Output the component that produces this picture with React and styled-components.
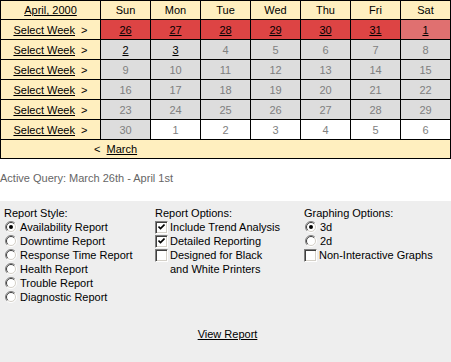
import React from "react";
import styled, { createGlobalStyle } from "styled-components";

const GlobalStyle = createGlobalStyle`
  html, body {
    margin: 0;
    padding: 0;
    background: #ffffff;
  }
  body {
    font-family: "Liberation Sans", Arial, sans-serif;
    font-size: 11px;
    color: #000;
  }
`;

const DAYS = ["Sun", "Mon", "Tue", "Wed", "Thu", "Fri", "Sat"];

// tone: red = active week, sat = active week edge, link = clickable past day,
// past = grey day of this month, next = next month
const WEEKS = [
  [
    [26, "red"], [27, "red"], [28, "red"], [29, "red"], [30, "red"], [31, "red"], [1, "sat"],
  ],
  [[2, "link"], [3, "link"], [4], [5], [6], [7], [8]],
  [[9], [10], [11], [12], [13], [14], [15]],
  [[16], [17], [18], [19], [20], [21], [22]],
  [[23], [24], [25], [26], [27], [28], [29]],
  [[30], [1, "next"], [2, "next"], [3, "next"], [4, "next"], [5, "next"], [6, "next"]],
];

const cellBg = {
  red: "#dd4444",
  sat: "#e07070",
  link: "#dddddd",
  past: "#dddddd",
  next: "#ffffff",
};

const Calendar = styled.div`
  display: grid;
  grid-template-columns: 99px repeat(7, 49px);
  grid-template-rows: 18px repeat(6, 19px) 18px;
  gap: 1px;
  padding: 1px;
  width: 451px;
  box-sizing: border-box;
  background: #000;
`;

const HeadCell = styled.div`
  background: #ffefbf;
  display: flex;
  align-items: center;
  justify-content: center;
  white-space: pre;
`;

const DayCell = styled.div`
  background: ${(p) => cellBg[p.$tone]};
  color: ${(p) => (p.$tone === "past" || p.$tone === "next" ? "#808080" : "#000")};
  display: flex;
  align-items: center;
  justify-content: center;
`;

const Footer = styled.div`
  grid-column: 1 / -1;
  background: #ffefbf;
  display: flex;
  align-items: center;
  padding-left: 93px;
  white-space: pre;
`;

const Link = styled.a`
  color: #000;
  text-decoration: underline;
  cursor: pointer;
`;

const ActiveQuery = styled.div`
  color: #666666;
  line-height: 14px;
  padding: 12px 0 16px;
`;

const Panel = styled.div`
  background: #eeeeee;
  padding: 5px 0 0 4px;
  min-height: 170px;
  box-sizing: border-box;
`;

const Columns = styled.div`
  display: grid;
  grid-template-columns: 151px 149px 1fr;
  line-height: 14px;
`;

const Group = styled.div`
  display: flex;
  flex-direction: column;
`;

const Option = styled.label`
  display: flex;
  align-items: flex-start;
  gap: ${(p) => (p.$box ? "2px" : "3px")};
  padding-left: ${(p) => (p.$box ? "0" : "1px")};
`;

const Mark = styled.span`
  flex: none;
  display: flex;
  margin-top: 1px;
`;

const Box = styled.span`
  flex: none;
  width: 13px;
  height: 13px;
  box-sizing: border-box;
  margin-top: 1px;
  background: #fff;
  border: 1px solid;
  border-color: #808080 #ffffff #ffffff #808080;
  box-shadow: inset 1px 1px 0 #404040, inset -1px -1px 0 #d4d0c8;
  display: flex;
  align-items: center;
  justify-content: center;
`;

const Submit = styled.div`
  text-align: center;
  margin-top: 23px;
  line-height: 14px;
`;

function Radio({ checked }) {
  return (
    <Mark>
      <svg width="12" height="12" viewBox="0 0 12 12">
        <circle cx="6" cy="6" r="5" fill="#fff" />
        <path d="M2.1 9.9 A5.5 5.5 0 0 1 9.9 2.1" fill="none" stroke="#808080" strokeWidth="1" />
        <path d="M9.9 2.1 A5.5 5.5 0 0 1 2.1 9.9" fill="none" stroke="#ffffff" strokeWidth="1" />
        <path d="M2.8 9.2 A4.5 4.5 0 0 1 9.2 2.8" fill="none" stroke="#404040" strokeWidth="1" />
        <path d="M9.2 2.8 A4.5 4.5 0 0 1 2.8 9.2" fill="none" stroke="#d4d0c8" strokeWidth="1" />
        {checked && <circle cx="6" cy="6" r="2" fill="#000" />}
      </svg>
    </Mark>
  );
}

function Check({ checked }) {
  return (
    <Box>
      {checked && (
        <svg width="7" height="7" viewBox="0 0 7 7">
          <path d="M0.5 2.5 L2.5 4.5 L6.5 0.5" fill="none" stroke="#000" strokeWidth="1.6" />
        </svg>
      )}
    </Box>
  );
}

const REPORTS = [
  "Availability Report",
  "Downtime Report",
  "Response Time Report",
  "Health Report",
  "Trouble Report",
  "Diagnostic Report",
];

export default function App() {
  return (
    <>
      <GlobalStyle />
      <Calendar>
        <HeadCell>
          <Link>April, 2000</Link>
        </HeadCell>
        {DAYS.map((d) => (
          <HeadCell key={d}>{d}</HeadCell>
        ))}
        {WEEKS.map((week, wi) => (
          <React.Fragment key={wi}>
            <HeadCell>
              <Link>Select Week</Link>
              {"  >"}
            </HeadCell>
            {week.map(([n, tone = "past"], di) => (
              <DayCell key={di} $tone={tone}>
                {tone === "red" || tone === "sat" || tone === "link" ? <Link>{n}</Link> : n}
              </DayCell>
            ))}
          </React.Fragment>
        ))}
        <Footer>
          {"<  "}
          <Link>March</Link>
        </Footer>
      </Calendar>

      <ActiveQuery>Active Query: March 26th - April 1st</ActiveQuery>

      <Panel>
        <Columns>
          <Group>
            <span>Report Style:</span>
            {REPORTS.map((r, i) => (
              <Option key={r}>
                <Radio checked={i === 0} />
                <span>{r}</span>
              </Option>
            ))}
          </Group>
          <Group>
            <span>Report Options:</span>
            <Option $box>
              <Check checked />
              <span>Include Trend Analysis</span>
            </Option>
            <Option $box>
              <Check checked />
              <span>Detailed Reporting</span>
            </Option>
            <Option $box>
              <Check />
              <span>
                Designed for Black
                <br />
                and White Printers
              </span>
            </Option>
          </Group>
          <Group>
            <span>Graphing Options:</span>
            <Option>
              <Radio checked />
              <span>3d</span>
            </Option>
            <Option>
              <Radio />
              <span>2d</span>
            </Option>
            <Option $box>
              <Check />
              <span>Non-Interactive Graphs</span>
            </Option>
          </Group>
        </Columns>
        <Submit>
          <Link>View Report</Link>
        </Submit>
      </Panel>
    </>
  );
}
